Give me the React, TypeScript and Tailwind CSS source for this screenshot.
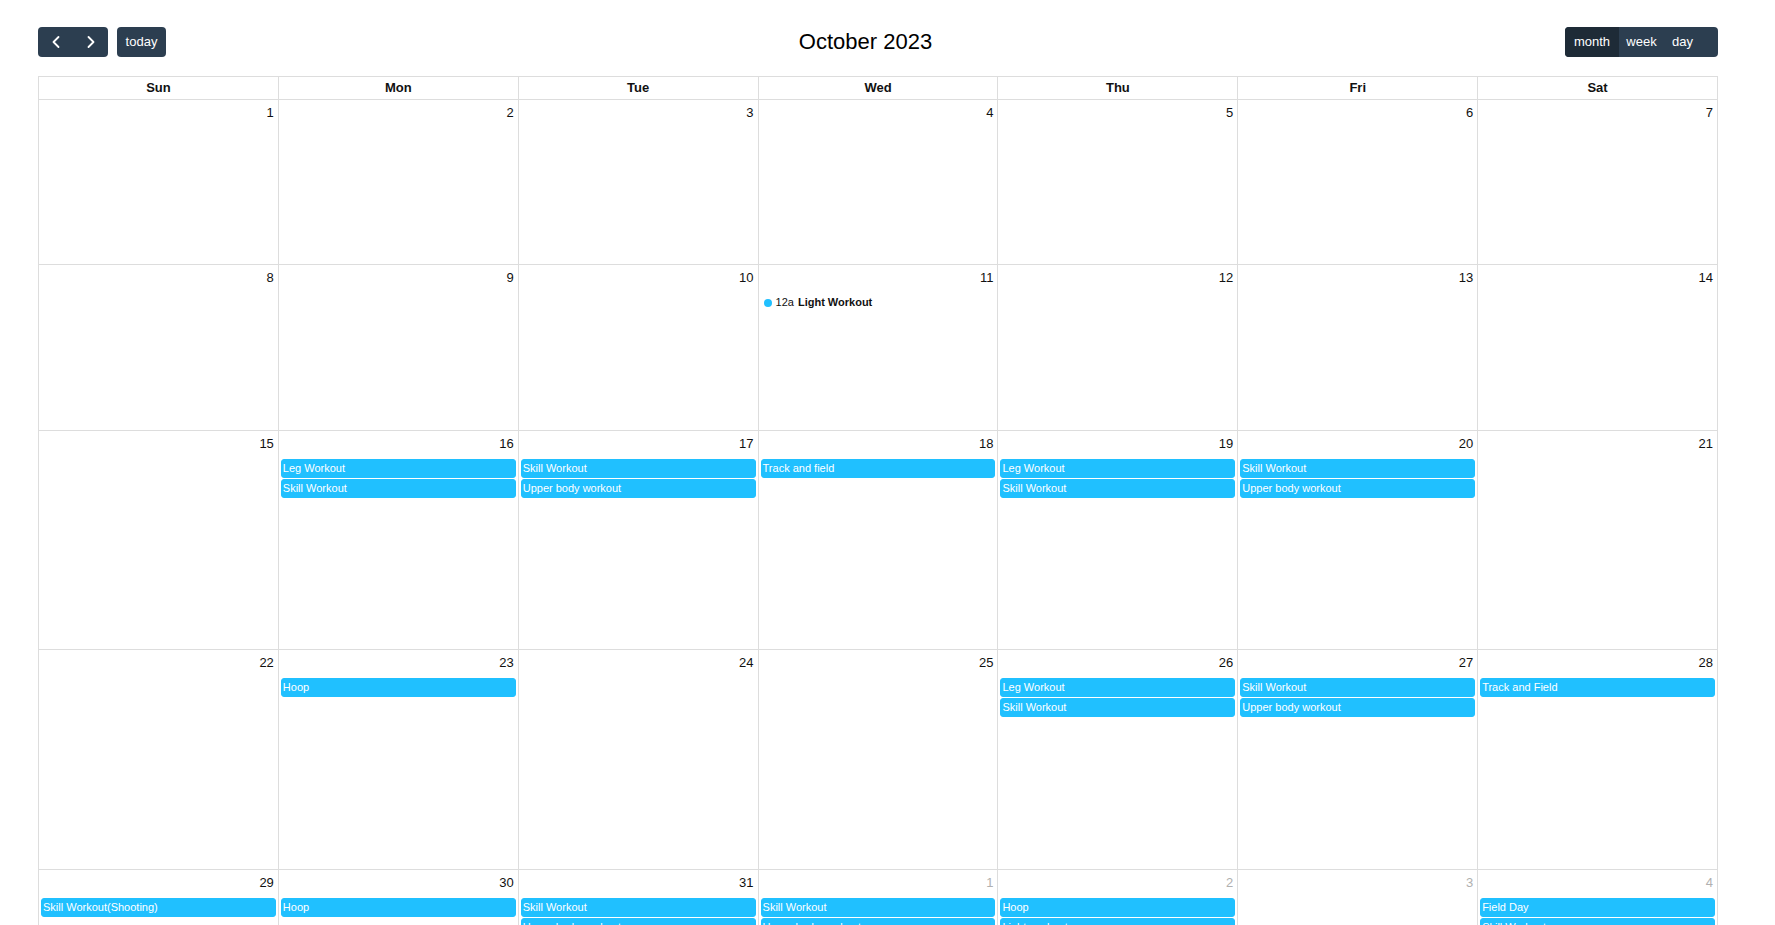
import React from 'react';
import { ChevronLeft, ChevronRight } from 'lucide-react';

type CalEvent = { title: string; time?: string; dot?: boolean };
type Day = { n: number; other?: boolean; events?: CalEvent[] };

const weeks: { height: string; days: Day[] }[] = [
  {
    height: 'h-[165px]',
    days: [{ n: 1 }, { n: 2 }, { n: 3 }, { n: 4 }, { n: 5 }, { n: 6 }, { n: 7 }],
  },
  {
    height: 'h-[166px]',
    days: [
      { n: 8 },
      { n: 9 },
      { n: 10 },
      { n: 11, events: [{ title: 'Light Workout', time: '12a', dot: true }] },
      { n: 12 },
      { n: 13 },
      { n: 14 },
    ],
  },
  {
    height: 'h-[219px]',
    days: [
      { n: 15 },
      { n: 16, events: [{ title: 'Leg Workout' }, { title: 'Skill Workout' }] },
      { n: 17, events: [{ title: 'Skill Workout' }, { title: 'Upper body workout' }] },
      { n: 18, events: [{ title: 'Track and field' }] },
      { n: 19, events: [{ title: 'Leg Workout' }, { title: 'Skill Workout' }] },
      { n: 20, events: [{ title: 'Skill Workout' }, { title: 'Upper body workout' }] },
      { n: 21 },
    ],
  },
  {
    height: 'h-[220px]',
    days: [
      { n: 22 },
      { n: 23, events: [{ title: 'Hoop' }] },
      { n: 24 },
      { n: 25 },
      { n: 26, events: [{ title: 'Leg Workout' }, { title: 'Skill Workout' }] },
      { n: 27, events: [{ title: 'Skill Workout' }, { title: 'Upper body workout' }] },
      { n: 28, events: [{ title: 'Track and Field' }] },
    ],
  },
  {
    height: 'h-[220px]',
    days: [
      { n: 29, events: [{ title: 'Skill Workout(Shooting)' }] },
      { n: 30, events: [{ title: 'Hoop' }] },
      { n: 31, events: [{ title: 'Skill Workout' }, { title: 'Upper body workout' }] },
      { n: 1, other: true, events: [{ title: 'Skill Workout' }, { title: 'Upper body workout' }] },
      { n: 2, other: true, events: [{ title: 'Hoop' }, { title: 'Light workout' }] },
      { n: 3, other: true },
      { n: 4, other: true, events: [{ title: 'Field Day' }, { title: 'Skill Workout' }] },
    ],
  },
];

const dayNames = ['Sun', 'Mon', 'Tue', 'Wed', 'Thu', 'Fri', 'Sat'];

const EventItem: React.FC<{ ev: CalEvent }> = ({ ev }) => {
  if (ev.dot) {
    return (
      <div className="mx-[2px] mb-[1px] flex h-[19px] items-center text-[11px] text-[#111]">
        <span className="ml-[3px] mr-[4px] h-[8px] w-[8px] rounded-full bg-[#20c0ff]" />
        <span className="mr-[4px]">{ev.time}</span>
        <span className="font-bold">{ev.title}</span>
      </div>
    );
  }
  return (
    <div className="mx-[2px] mb-[1px] h-[19px] overflow-hidden whitespace-nowrap rounded-[3px] border border-[#20c0ff] bg-[#20c0ff] px-[1px] text-[11px] leading-[17px] text-white">
      {ev.title}
    </div>
  );
};

export default function App() {
  return (
    <div
      className="h-screen overflow-hidden bg-white text-[#111]"
      style={{ fontFamily: '"Liberation Sans", Arial, sans-serif' }}
    >
      <div className="ml-[38px] w-[1680px] pt-[27px]">
        <div className="flex h-[30px] items-center justify-between">
          <div className="flex items-center gap-[9px]">
            <div className="flex h-[30px] overflow-hidden rounded-[4px] bg-[#2c3e50] text-white">
              <button className="flex w-[35px] items-center justify-center">
                <ChevronLeft size={20} strokeWidth={2.2} />
              </button>
              <button className="flex w-[35px] items-center justify-center">
                <ChevronRight size={20} strokeWidth={2.2} />
              </button>
            </div>
            <button className="h-[30px] w-[49px] rounded-[4px] bg-[#2c3e50] text-[13px] text-white">
              today
            </button>
          </div>
          <h2 className="text-[22px] leading-none text-black">October 2023</h2>
          <div className="flex h-[30px] overflow-hidden rounded-[4px] bg-[#2c3e50] text-[13px] text-white">
            <button className="w-[54px] bg-[#1e2b37]">month</button>
            <button className="w-[45px]">week</button>
            <button className="w-[37px]">day</button>
            <span className="w-[17px]" />
          </div>
        </div>

        <div className="mt-[19px] border-l border-t border-[#ddd]">
          <div className="grid grid-cols-7">
            {dayNames.map((d) => (
              <div
                key={d}
                className="flex h-[23px] items-center justify-center border-b border-r border-[#ddd] text-[13px] font-bold"
              >
                {d}
              </div>
            ))}
          </div>
          {weeks.map((w, wi) => (
            <div key={wi} className="grid grid-cols-7">
              {w.days.map((day, di) => (
                <div key={di} className={`${w.height} border-b border-r border-[#ddd]`}>
                  <div
                    className={`h-[21px] pr-[4px] pt-[5px] text-right text-[13px] leading-[16px] ${
                      day.other ? 'text-[#b0b0b0]' : 'text-[#111]'
                    }`}
                  >
                    {day.n}
                  </div>
                  <div className="mt-[7px]">
                    {day.events?.map((ev, ei) => (
                      <EventItem key={ei} ev={ev} />
                    ))}
                  </div>
                </div>
              ))}
            </div>
          ))}
        </div>
      </div>
    </div>
  );
}
